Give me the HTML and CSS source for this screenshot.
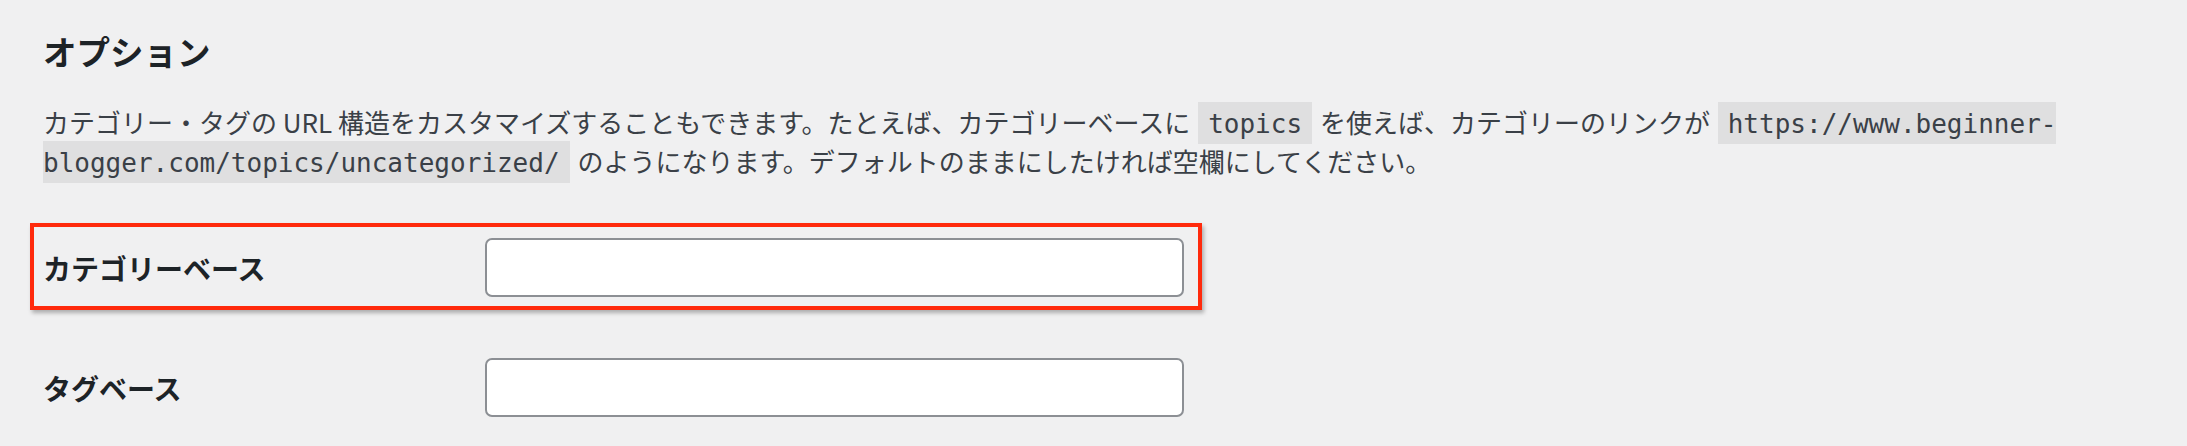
FILE: index.html
```html
<!DOCTYPE html>
<html lang="ja">
<head>
<meta charset="utf-8">
<title>オプション</title>
<link rel="stylesheet" href="styles.css">
</head>
<body>
<div class="wrap">
  <h2 class="title">オプション</h2>
  <p class="desc">カテゴリー・タグの URL 構造をカスタマイズすることもできます。たとえば、カテゴリーベースに <code>topics</code> を使えば、カテゴリーのリンクが <code>https://www.beginner-blogger.com/topics/uncategorized/</code> のようになります。デフォルトのままにしたければ空欄にしてください。</p>
  <div class="form-table">
    <div class="row">
      <label class="th" for="category_base">カテゴリーベース</label>
      <div class="td"><input id="category_base" class="regular-text" type="text"></div>
      <span class="annotation" aria-hidden="true"></span>
    </div>
    <div class="row">
      <label class="th" for="tag_base">タグベース</label>
      <div class="td"><input id="tag_base" class="regular-text" type="text"></div>
    </div>
  </div>
</div>
</body>
</html>
```

FILE: styles.css
```css
html, body {
  margin: 0;
  padding: 0;
  background: #f0f0f1;
}

body {
  font-family: "Noto Sans CJK JP", "Noto Sans", sans-serif;
  color: #3c434a;
}

.wrap {
  padding: 0 43px;
}

.title {
  margin: 27px 0 0;
  font-size: 33.5px;
  line-height: 47px;
  font-weight: 700;
  color: #1d2327;
}

.desc {
  margin: 28px 0 0;
  font-size: 26px;
  line-height: 39px;
  color: #3a4047;
}

.desc code {
  font-family: "DejaVu Sans Mono", "Liberation Mono", monospace;
  font-size: 26px;
  line-height: 1;
  padding: 7px 10px 5px;
  margin: 0 2px;
  background: rgba(0, 0, 0, 0.07);
  color: #3a4047;
}

.form-table {
  margin-top: 28px;
  display: flex;
  flex-direction: column;
}

.row {
  position: relative;
  display: flex;
  align-items: center;
  padding: 30px 0 31px;
}

.th {
  width: 442px;
  flex: none;
  font-size: 28px;
  font-weight: 700;
  color: #1d2327;
  line-height: 36px;
}

.td {
  display: flex;
}

.regular-text {
  box-sizing: border-box;
  width: 699px;
  height: 59px;
  margin: 0;
  padding: 0 16px;
  border: 2px solid #8c8f94;
  border-radius: 7px;
  background: #fff;
  font-family: inherit;
  font-size: 28px;
  outline: none;
}

.annotation {
  position: absolute;
  top: 15px;
  left: -13px;
  width: 1172px;
  height: 87px;
  box-sizing: border-box;
  border: 4px solid #ff2a0c;
  box-shadow: 2px 3px 4px rgba(0, 0, 0, 0.28);
  pointer-events: none;
}
```
